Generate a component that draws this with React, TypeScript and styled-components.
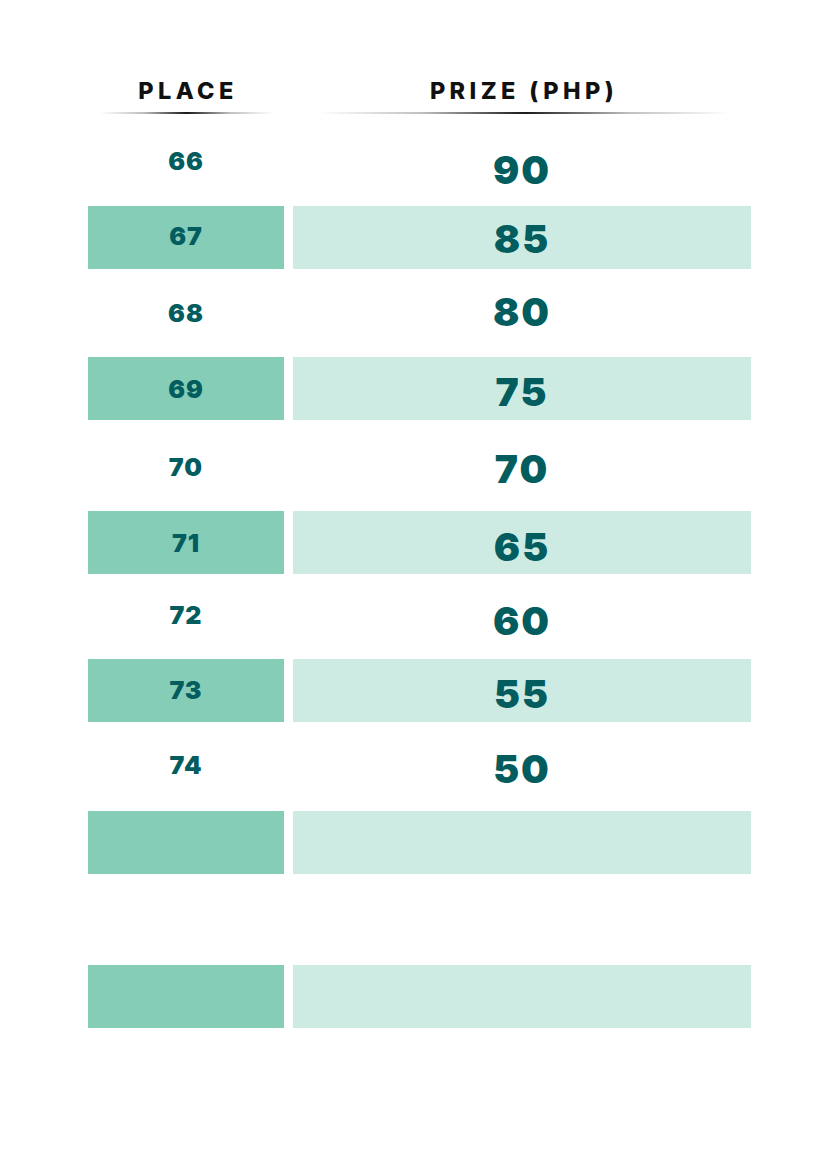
import React from "react";
import styled, { createGlobalStyle } from "styled-components";

const Global = createGlobalStyle`
  html, body { margin: 0; padding: 0; background: #ffffff; }
  body { font-family: Inter, "Noto Sans", sans-serif; }
`;

const Page = styled.div`
  width: 839px;
  min-height: 1166px;
  background: #ffffff;
  padding: 74px 0 0 88px;
  box-sizing: border-box;
`;

const Table = styled.div`
  display: flex;
  flex-direction: column;
  width: 663px;
`;

const Grid = styled.div<{ $h: number }>`
  display: grid;
  grid-template-columns: 196px 458px;
  column-gap: 9px;
  height: ${(p) => p.$h}px;
`;

const HeadCell = styled.div<{ $inL: number; $inR: number }>`
  position: relative;
  display: flex;
  justify-content: center;
  font-family: Inter, sans-serif;
  font-weight: 800;
  font-size: 23.5px;
  line-height: 30px;
  letter-spacing: 4.4px;
  padding: 2px 0 0 4px;
  box-sizing: border-box;
  color: #111111;
  &::after {
    content: "";
    position: absolute;
    left: ${(p) => p.$inL}px;
    right: ${(p) => p.$inR}px;
    top: 38px;
    height: 1.5px;
    background: linear-gradient(
      90deg,
      rgba(0, 0, 0, 0) 0%,
      rgba(0, 0, 0, 0.25) 25%,
      rgba(0, 0, 0, 0.9) 50%,
      rgba(0, 0, 0, 0.25) 75%,
      rgba(0, 0, 0, 0) 100%
    );
  }
`;

const Cell = styled.div<{ $bg: string; $big?: boolean; $dy: number }>`
  display: flex;
  align-items: center;
  justify-content: center;
  background: ${(p) => p.$bg};
  font-family: Inter, sans-serif;
  font-weight: 900;
  color: #035c5e;
  font-size: ${(p) => (p.$big ? 39 : 25)}px;
  letter-spacing: ${(p) => (p.$big ? 2 : 1)}px;
  line-height: 1;
  padding-top: ${(p) => Math.max(0, p.$dy * 2)}px;
  padding-bottom: ${(p) => Math.max(0, -p.$dy * 2)}px;
  box-sizing: border-box;
`;

type Row = {
  place: string;
  prize: string;
  shaded: boolean;
  h: number;
  dyPlace: number;
  dyPrize: number;
};

const rows: Row[] = [
  { place: "66", prize: "90", shaded: false, h: 86, dyPlace: -1.5, dyPrize: 6 },
  { place: "67", prize: "85", shaded: true, h: 63, dyPlace: -1, dyPrize: 0.5 },
  { place: "68", prize: "80", shaded: false, h: 88, dyPlace: 0.5, dyPrize: -2 },
  { place: "69", prize: "75", shaded: true, h: 63, dyPlace: 0.5, dyPrize: 3 },
  { place: "70", prize: "70", shaded: false, h: 91, dyPlace: 1.5, dyPrize: 3 },
  { place: "71", prize: "65", shaded: true, h: 63, dyPlace: 0.5, dyPrize: 3.5 },
  { place: "72", prize: "60", shaded: false, h: 85, dyPlace: -1, dyPrize: 3.5 },
  { place: "73", prize: "55", shaded: true, h: 63, dyPlace: -0.5, dyPrize: 2.5 },
  { place: "74", prize: "50", shaded: false, h: 89, dyPlace: -1, dyPrize: 1.5 },
  { place: "", prize: "", shaded: true, h: 63, dyPlace: 0, dyPrize: 0 },
  { place: "", prize: "", shaded: false, h: 91, dyPlace: 0, dyPrize: 0 },
  { place: "", prize: "", shaded: true, h: 63, dyPlace: 0, dyPrize: 0 },
];

export default function App() {
  return (
    <>
      <Global />
      <Page>
        <Table>
          <Grid $h={46}>
            <HeadCell $inL={12} $inR={11}>PLACE</HeadCell>
            <HeadCell $inL={27} $inR={21}>PRIZE (PHP)</HeadCell>
          </Grid>
          {rows.map((r, i) => (
            <Grid key={i} $h={r.h}>
              <Cell $bg={r.shaded ? "#86cdb8" : "transparent"} $dy={r.dyPlace}>
                {r.place}
              </Cell>
              <Cell $bg={r.shaded ? "#cdebe2" : "transparent"} $dy={r.dyPrize} $big>
                {r.prize}
              </Cell>
            </Grid>
          ))}
        </Table>
      </Page>
    </>
  );
}
